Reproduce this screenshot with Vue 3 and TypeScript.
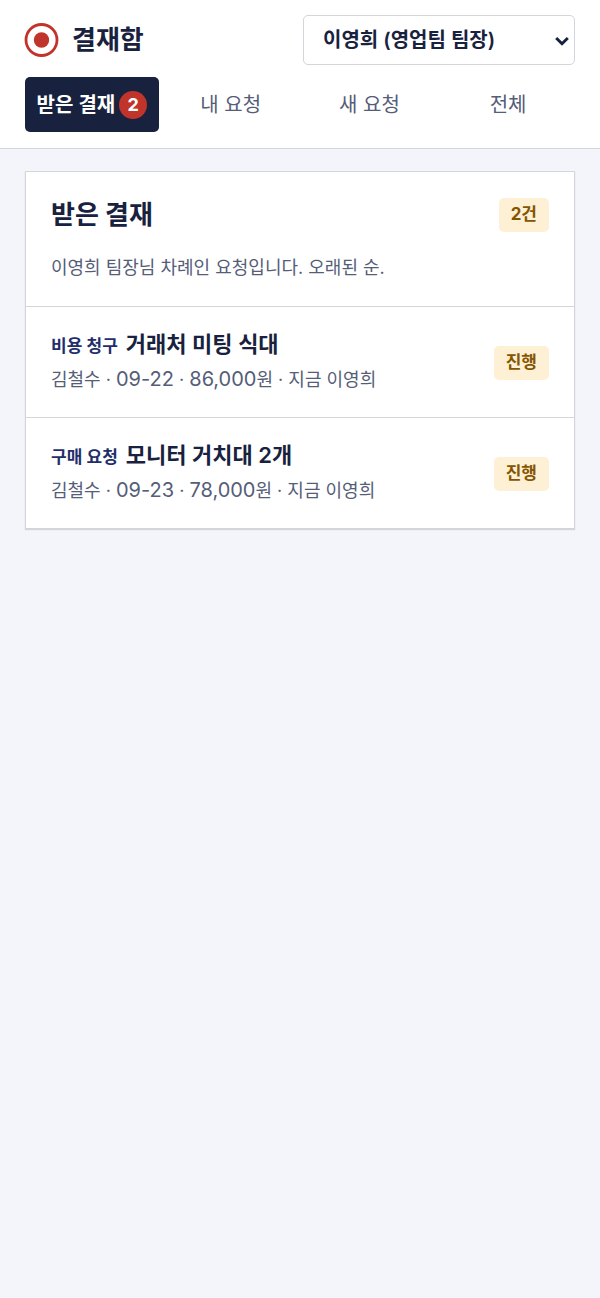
<script setup lang="ts">
import { computed, ref } from 'vue'

interface Tab {
  id: string
  label: string
  badge?: number
}

interface ApprovalRequest {
  id: number
  kind: string
  title: string
  requester: string
  date: string
  amount: string
  current: string
  status: string
}

const tabs: Tab[] = [
  { id: 'inbox', label: '받은 결재', badge: 2 },
  { id: 'mine', label: '내 요청' },
  { id: 'new', label: '새 요청' },
  { id: 'all', label: '전체' },
]

const requests: ApprovalRequest[] = [
  { id: 1, kind: '비용 청구', title: '거래처 미팅 식대', requester: '김철수', date: '09-22', amount: '86,000', current: '이영희', status: '진행' },
  { id: 2, kind: '구매 요청', title: '모니터 거치대 2개', requester: '김철수', date: '09-23', amount: '78,000', current: '이영희', status: '진행' },
]

const activeTab = ref('inbox')
const user = ref('younghee')
const countLabel = computed(() => `${requests.length}건`)
</script>

<template>
  <div class="page">
    <header class="topbar">
      <div class="brand-row">
        <div class="brand">
          <svg class="logo" viewBox="0 0 34 34" aria-hidden="true">
            <circle cx="16.500" cy="17" r="15.5" fill="none" stroke="#c0342b" stroke-width="2.800" />
            <circle cx="16.500" cy="17" r="7.7" fill="#c0342b" />
          </svg>
          <h1 class="brand-name">결재함</h1>
        </div>
        <div class="picker">
          <select v-model="user" class="user-select" aria-label="사용자">
            <option value="younghee">이영희 (영업팀 팀장)</option>
          </select>
          <svg class="chevron" viewBox="0 0 14 10" aria-hidden="true">
            <path d="M1.2 2 L7 7.700 L12.800 2" fill="none" stroke="#18223e" stroke-width="3" />
          </svg>
        </div>
      </div>
      <nav class="tabs">
        <button
          v-for="tab in tabs"
          :key="tab.id"
          type="button"
          class="tab"
          :class="{ active: tab.id === activeTab }"
          @click="activeTab = tab.id"
        >
          <span>{{ tab.label }}</span>
          <span v-if="tab.badge" class="badge">{{ tab.badge }}</span>
        </button>
      </nav>
    </header>

    <main class="content">
      <section class="card">
        <div class="card-head">
          <div class="card-title-row">
            <h2 class="card-title">받은 결재</h2>
            <span class="pill">{{ countLabel }}</span>
          </div>
          <p class="card-note">이영희 팀장님 차례인 요청입니다. 오래된 순.</p>
        </div>
        <ul class="list">
          <li v-for="item in requests" :key="item.id" class="item">
            <div class="item-body">
              <div class="item-heading">
                <span class="kind">{{ item.kind }}</span>
                <strong class="item-title">{{ item.title }}</strong>
              </div>
              <div class="meta">{{ item.requester }} · <span class="figure">{{ item.date }}</span> · <span class="figure">{{ item.amount }}</span>원 · 지금 {{ item.current }}</div>
            </div>
            <span class="pill">{{ item.status }}</span>
          </li>
        </ul>
      </section>
    </main>
  </div>
</template>

<style>
body {
  background: #f3f5fa;
}
</style>

<style scoped>
.page {
  min-height: 100vh;
  background: #f3f5fa;
  color: #18223e;
  font-family: Inter, 'Noto Sans CJK KR', sans-serif;
  font-size: 18px;
}

.topbar {
  padding: 15px 25px 16px;
  background: #fff;
  border-bottom: 1px solid #d2d5da;
}

.brand-row {
  display: flex;
  align-items: center;
  justify-content: space-between;
  gap: 16px;
}

.brand {
  display: flex;
  align-items: center;
  gap: 13px;
}

.logo {
  width: 34px;
  height: 34px;
  overflow: visible;
}

.brand-name,
.card-title {
  margin: 0;
  font-size: 26px;
  line-height: 38px;
  font-weight: 700;
}

.picker {
  position: relative;
  flex: 0 1 272px;
}

.user-select {
  display: block;
  width: 100%;
  height: 50px;
  padding: 0 36px 0 19px;
  appearance: none;
  border: 1px solid #d2d5da;
  border-radius: 5px;
  background: #fff;
  color: #18223e;
  font-family: inherit;
  font-size: 20px;
  font-weight: 600;
}

.chevron {
  position: absolute;
  top: 21px;
  right: 6px;
  width: 14px;
  height: 10px;
  pointer-events: none;
}

.tabs {
  display: grid;
  grid-template-columns: repeat(4, 1fr);
  gap: 5px;
  margin-top: 12px;
}

.tab {
  display: flex;
  align-items: center;
  justify-content: center;
  gap: 4px;
  height: 55px;
  padding: 0;
  border: 0;
  border-radius: 5px;
  background: transparent;
  color: #555d78;
  font-family: inherit;
  font-size: 20px;
  line-height: 28px;
  white-space: nowrap;
}

.tab.active {
  background: #18223e;
  color: #fff;
  font-weight: 600;
}

.badge {
  width: 28px;
  height: 28px;
  border-radius: 50%;
  background: #c0342b;
  font-size: 18px;
  font-weight: 700;
}

.content {
  padding: 22px 25px;
}

.card {
  background: #fff;
  border: 1px solid #d2d5da;
  box-shadow: 0 1px 1px #d2d5da;
}

.card-head {
  padding: 24px 25px;
}

.card-title-row {
  display: flex;
  align-items: center;
  justify-content: space-between;
}

.card-note {
  margin: 19px 0 0;
  color: #555d78;
  line-height: 29px;
}

.list {
  margin: 0;
  padding: 0;
  list-style: none;
}

.item {
  display: flex;
  align-items: center;
  justify-content: space-between;
  gap: 16px;
  padding: 20px 25px 19px;
  border-top: 1px solid #d2d5da;
}

.item-heading {
  display: flex;
  align-items: baseline;
  gap: 8px;
  height: 34px;
  line-height: 34px;
}

.kind {
  color: #1f2f6b;
  font-size: 17px;
  font-weight: 600;
}

.item-title {
  font-size: 22px;
  font-weight: 600;
}

.meta {
  height: 37px;
  color: #555d78;
  line-height: 37px;
}

.figure {
  font-size: 20px;
}

.pill {
  flex: none;
  padding: 2px 12px 4px;
  border-radius: 5px;
  background: #fdf0d5;
  color: #855500;
  font-size: 17px;
  line-height: 28px;
  font-weight: 700;
}
</style>
